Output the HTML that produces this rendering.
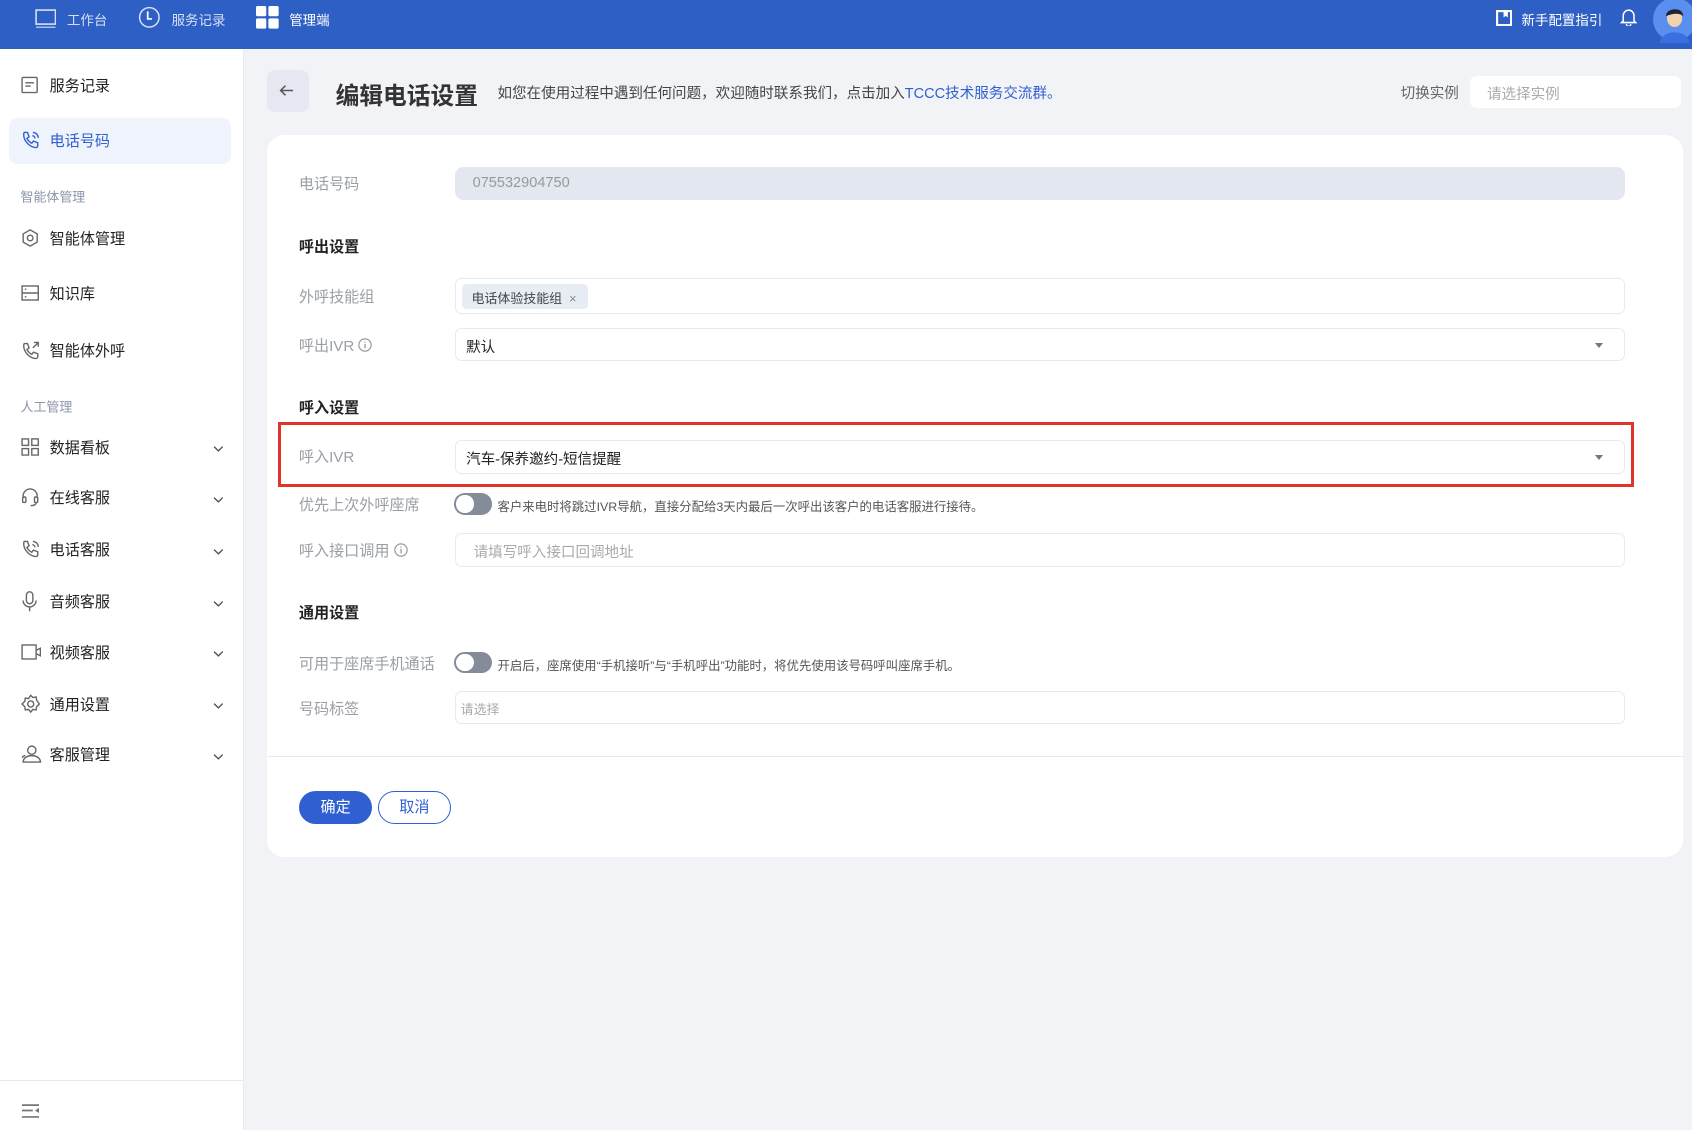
<!DOCTYPE html>
<html><head><meta charset="utf-8"><style>
html{zoom:1.07908}
*{box-sizing:border-box;margin:0;padding:0}
body{width:1568px;height:1047px;overflow:hidden;background:#f2f3f7;font-family:"Liberation Sans","Noto Sans CJK SC",sans-serif;position:relative;color:#222}
.a{position:absolute}
.hdr{left:0;top:0;width:1568px;height:45px;background:#2e5fc5}
.hdr span{color:#fff;font-size:12.5px}
.side{left:0;top:45px;width:226px;height:1002px;background:#fff;border-right:1px solid #e8eaef}
.it{position:absolute;left:46px;font-size:14px;color:#222;transform:translateY(-50%)}
.ic{position:absolute;left:19px;transform:translateY(-50%)}
.sec{position:absolute;left:19px;font-size:12px;color:#8b94aa;transform:translateY(-50%)}
.chev{position:absolute;left:197px;transform:translateY(-50%)}
.lbl{position:absolute;left:277px;font-size:14px;color:#9a9ea6;transform:translateY(-50%)}
.h{position:absolute;left:277px;font-size:14px;color:#222;font-weight:bold;transform:translateY(-50%)}
.inp{position:absolute;left:422px;width:1084px;border:1px solid #e8eaf0;border-radius:6px;background:#fff}
.arr{position:absolute;right:20px;top:50%;margin-top:-2px;border-left:4px solid transparent;border-right:4px solid transparent;border-top:5px solid #777}
.tog{position:absolute;left:421px;width:35px;height:20px;border-radius:10px;background:#848b99}
.tog:after{content:"";position:absolute;left:2px;top:2px;width:16px;height:16px;border-radius:50%;background:#fff}
.hint{position:absolute;left:461px;font-size:11.5px;color:#555;transform:translateY(-50%)}
</style></head><body>
<div class="a hdr">
 <svg class="a" style="left:32px;top:8px" width="20" height="18" viewBox="0 0 20 18"><rect x="1" y="1" width="18" height="13" fill="none" stroke="#fff" stroke-width="1.5" opacity=".8"/><line x1="1" y1="17" x2="19" y2="17" stroke="#fff" stroke-width="1.5" opacity=".6"/></svg>
 <span class="a" style="left:62px;top:8px;opacity:.8">工作台</span>
 <svg class="a" style="left:128px;top:6px" width="21" height="21" viewBox="0 0 21 21"><circle cx="10.5" cy="10.5" r="9" fill="none" stroke="#fff" stroke-width="1.4" opacity=".8"/><path d="M9 5v7h4" fill="none" stroke="#fff" stroke-width="1.6"/></svg>
 <span class="a" style="left:159px;top:8px;opacity:.8">服务记录</span>
 <svg class="a" style="left:237px;top:6px" width="22" height="22" viewBox="0 0 22 22"><rect x="0" y="0" width="9.5" height="9.5" rx="1.5" fill="#fff"/><rect x="11.5" y="0" width="9.5" height="9.5" rx="1.5" fill="#fff"/><rect x="0" y="11.5" width="9.5" height="9.5" rx="1.5" fill="#fff"/><rect x="11.5" y="11.5" width="9.5" height="9.5" rx="1.5" fill="#fff"/></svg>
 <span class="a" style="left:268px;top:8px">管理端</span>
 <svg class="a" style="left:1386px;top:9px" width="15" height="15" viewBox="0 0 15 15"><rect x="1" y="1" width="13" height="13" fill="none" stroke="#fff" stroke-width="2"/><path d="M7 1v6l2-1.5 2 1.5V1z" fill="#fff"/></svg>
 <span class="a" style="left:1410px;top:8px">新手配置指引</span>
 <svg class="a" style="left:1501px;top:7px" width="16" height="17" viewBox="0 0 16 17"><path d="M3 12V7a5 5 0 0110 0v5l1.5 1.5h-13z" fill="none" stroke="#fff" stroke-width="1.4"/><path d="M6 15a2 2 0 004 0" fill="none" stroke="#fff" stroke-width="1.3"/></svg>
 <svg class="a" style="left:1532px;top:0px" width="36" height="40" viewBox="0 0 36 40"><circle cx="20" cy="18" r="20" fill="#5a8ff0"/><path d="M6 40c2-8 8-10 14-10s12 2 14 10z" fill="#3a6fe0"/><ellipse cx="20" cy="17" rx="7" ry="8" fill="#f3d2b0"/><path d="M12 15c0-8 16-9 16 0-3-3-9-3-16 0z" fill="#1d2433"/></svg>
</div>
<div class="a side">
 <svg class="ic" style="top:34px" width="16" height="16" viewBox="0 0 16 16"><rect x="1" y="1" width="14" height="14" rx="1" fill="none" stroke="#666" stroke-width="1.3"/><path d="M4 6h8M4 9h5" stroke="#666" stroke-width="1.3"/></svg>
 <div class="it" style="top:34px">服务记录</div>
 <div class="a" style="left:8px;top:64px;width:206px;height:43px;border-radius:8px;background:#eef3fc"></div>
 <svg class="ic" style="top:85px" width="18" height="18" viewBox="0 0 18 18"><path d="M3 2l3 0 1.5 4-2 1.5c1 2 2.5 3.5 4.5 4.5l1.5-2 4 1.5v3c0 1-1 1.5-2 1.5C8 15.5 2.5 10 2.5 4c0-1 .5-2 .5-2z" fill="none" stroke="#2f5fd0" stroke-width="1.3"/><path d="M11 2a5 5 0 015 5M10.5 5a2.5 2.5 0 012.5 2.5" fill="none" stroke="#2f5fd0" stroke-width="1.3"/></svg>
 <div class="it" style="top:85px;color:#2f5fd0">电话号码</div>
 <div class="sec" style="top:137px">智能体管理</div>
 <svg class="ic" style="top:176px" width="17" height="17" viewBox="0 0 17 17"><path d="M8.5 1l6.5 3.7v7.6L8.5 16 2 12.3V4.7z" fill="none" stroke="#666" stroke-width="1.3"/><circle cx="8.5" cy="8.5" r="2.6" fill="none" stroke="#666" stroke-width="1.3"/></svg>
 <div class="it" style="top:176px">智能体管理</div>
 <svg class="ic" style="top:227px" width="17" height="15" viewBox="0 0 17 15"><rect x="1" y="1" width="15" height="13" fill="none" stroke="#666" stroke-width="1.3"/><path d="M1 7.5h15" stroke="#666" stroke-width="1.3"/><path d="M3.5 4h1.5M3.5 11h1.5" stroke="#666" stroke-width="1.3"/></svg>
 <div class="it" style="top:227px">知识库</div>
 <svg class="ic" style="top:279px" width="18" height="18" viewBox="0 0 18 18"><path d="M3 3l3 0 1.5 4-2 1.5c1 2 2.5 3.5 4.5 4.5l1.5-2 4 1.5v3c0 1-1 1.5-2 1.5C8 16.5 2.5 11 2.5 5c0-1 .5-2 .5-2z" fill="none" stroke="#666" stroke-width="1.3"/><path d="M11 7l5-5M12 2h4v4" fill="none" stroke="#666" stroke-width="1.3"/></svg>
 <div class="it" style="top:279px">智能体外呼</div>
 <div class="sec" style="top:331px">人工管理</div>
 <svg class="ic" style="top:369px" width="17" height="17" viewBox="0 0 17 17" fill="none" stroke="#666" stroke-width="1.3"><rect x="1" y="1" width="6" height="6"/><rect x="10" y="1" width="6" height="6"/><rect x="1" y="10" width="6" height="6"/><rect x="10" y="10" width="6" height="6"/></svg>
 <div class="it" style="top:369px">数据看板</div>
 <svg class="ic" style="top:416px" width="17" height="18" viewBox="0 0 17 18" fill="none" stroke="#666" stroke-width="1.3"><path d="M2 10V8a6.5 6.5 0 0113 0v2"/><rect x="1.5" y="9" width="3" height="5" rx="1"/><rect x="12.5" y="9" width="3" height="5" rx="1"/><path d="M14 14c0 2-2 3-5 3"/></svg>
 <div class="it" style="top:416px">在线客服</div>
 <svg class="ic" style="top:464px" width="18" height="18" viewBox="0 0 18 18"><path d="M3 2l3 0 1.5 4-2 1.5c1 2 2.5 3.5 4.5 4.5l1.5-2 4 1.5v3c0 1-1 1.5-2 1.5C8 15.5 2.5 10 2.5 4c0-1 .5-2 .5-2z" fill="none" stroke="#666" stroke-width="1.3"/><path d="M11 2a5 5 0 015 5M10.5 5a2.5 2.5 0 012.5 2.5" fill="none" stroke="#666" stroke-width="1.3"/></svg>
 <div class="it" style="top:464px">电话客服</div>
 <svg class="ic" style="top:512px" width="16" height="19" viewBox="0 0 16 19" fill="none" stroke="#666" stroke-width="1.3"><rect x="5" y="1" width="6" height="11" rx="3"/><path d="M2 9a6 6 0 0012 0M8 15v4"/></svg>
 <div class="it" style="top:512px">音频客服</div>
 <svg class="ic" style="top:559px" width="19" height="15" viewBox="0 0 19 15" fill="none" stroke="#666" stroke-width="1.3"><rect x="1" y="1" width="13" height="13"/><path d="M14 6l4-2v7l-4-2"/></svg>
 <div class="it" style="top:559px">视频客服</div>
 <svg class="ic" style="top:607px" width="18" height="18" viewBox="0 0 18 18" fill="none" stroke="#666" stroke-width="1.3"><path d="M9 1l2 2 3-.5.5 3L17 9l-2.5 2.5-.5 3-3-.5-2 2.5-2-2.5-3 .5-.5-3L1 9l2.5-2.5.5-3 3 .5z"/><circle cx="9" cy="9" r="2.8"/></svg>
 <div class="it" style="top:607px">通用设置</div>
 <svg class="ic" style="top:654px" width="20" height="17" viewBox="0 0 20 17" fill="none" stroke="#666" stroke-width="1.3"><circle cx="10" cy="5" r="3.8"/><path d="M2 16c0-4 4-6 8-6s8 2 8 6z"/><path d="M1 12c1-1.5 2-2 3-2"/></svg>
 <div class="it" style="top:654px">客服管理</div>
 <div class="chev" style="top:369px"><svg width="10" height="6" viewBox="0 0 10 6"><path d="M1 1l4 4 4-4" fill="none" stroke="#555" stroke-width="1.3"/></svg></div>
 <div class="chev" style="top:416px"><svg width="10" height="6" viewBox="0 0 10 6"><path d="M1 1l4 4 4-4" fill="none" stroke="#555" stroke-width="1.3"/></svg></div>
 <div class="chev" style="top:464px"><svg width="10" height="6" viewBox="0 0 10 6"><path d="M1 1l4 4 4-4" fill="none" stroke="#555" stroke-width="1.3"/></svg></div>
 <div class="chev" style="top:512px"><svg width="10" height="6" viewBox="0 0 10 6"><path d="M1 1l4 4 4-4" fill="none" stroke="#555" stroke-width="1.3"/></svg></div>
 <div class="chev" style="top:559px"><svg width="10" height="6" viewBox="0 0 10 6"><path d="M1 1l4 4 4-4" fill="none" stroke="#555" stroke-width="1.3"/></svg></div>
 <div class="chev" style="top:607px"><svg width="10" height="6" viewBox="0 0 10 6"><path d="M1 1l4 4 4-4" fill="none" stroke="#555" stroke-width="1.3"/></svg></div>
 <div class="chev" style="top:654px"><svg width="10" height="6" viewBox="0 0 10 6"><path d="M1 1l4 4 4-4" fill="none" stroke="#555" stroke-width="1.3"/></svg></div>
 <div class="a" style="left:0;top:956px;width:226px;border-top:1px solid #e8eaef"></div>
 <svg class="a" style="left:20px;top:978px" width="16" height="13" viewBox="0 0 16 13"><path d="M0 1h16M0 6h10M0 12h16" stroke="#777" stroke-width="1.6"/><path d="M16 3.5v5l-4-2.5z" fill="#777"/></svg>
</div>

<div class="a" style="left:247px;top:65px;width:39px;height:39px;border-radius:8px;background:#e5e8f0"></div>
<svg class="a" style="left:259px;top:78px" width="14" height="12" viewBox="0 0 14 12"><path d="M13 6H2M6 1.5L1.5 6 6 10.5" fill="none" stroke="#555" stroke-width="1.4"/></svg>
<div class="a" style="left:311px;top:70px;font-size:22px;font-weight:bold;color:#333">编辑电话设置</div>
<div class="a" style="left:461px;top:76px;font-size:13.5px;color:#444">如您在使用过程中遇到任何问题，欢迎随时联系我们，点击加入<span style="color:#2f5fd0">TCCC技术服务交流群。</span></div>
<div class="a" style="left:1298px;top:76px;font-size:13.5px;color:#666">切换实例</div>
<div class="a" style="left:1362px;top:70px;width:196px;height:30px;background:#fff;border-radius:6px;padding:7px 16px;font-size:13.5px;color:#aaa">请选择实例</div>

<div class="a" style="left:247px;top:125px;width:1313px;height:669px;background:#fff;border-radius:16px"></div>
<div class="lbl" style="top:170px">电话号码</div>
<div class="a" style="left:422px;top:155px;width:1084px;height:30px;background:#e3e7ef;border-radius:8px;padding:7px 16px;font-size:13.5px;line-height:16px;color:#999">075532904750</div>
<div class="h" style="top:228px">呼出设置</div>
<div class="lbl" style="top:274px">外呼技能组</div>
<div class="inp" style="top:258px;height:33px"></div>
<div class="a" style="left:428px;top:263px;width:117px;height:23px;background:#e8ecf5;border-radius:4px;font-size:12px;color:#444;padding:4px 9px">电话体验技能组 <span style="color:#888;margin-left:3px">×</span></div>
<div class="lbl" style="top:320px">呼出IVR <svg width="13" height="13" viewBox="0 0 13 13" style="vertical-align:-1px"><circle cx="6.5" cy="6.5" r="5.7" fill="none" stroke="#999" stroke-width="1.1"/><path d="M6.5 5.5v4M6.5 3.3v1" stroke="#999" stroke-width="1.2"/></svg></div>
<div class="inp" style="top:304px;height:31px"><span class="a" style="left:9px;top:6px;font-size:13.5px;color:#222">默认</span><div class="arr"></div></div>
<div class="h" style="top:377px">呼入设置</div>
<div class="lbl" style="top:423px">呼入IVR</div>
<div class="inp" style="top:408px;height:31px"><span class="a" style="left:9px;top:6px;font-size:13.5px;color:#222">汽车-保养邀约-短信提醒</span><div class="arr"></div></div>
<div class="a" style="left:258px;top:391px;width:1256px;height:60px;border:3px solid #e0332a"></div>
<div class="lbl" style="top:467px">优先上次外呼座席</div>
<div class="tog" style="top:457px"></div>
<div class="hint" style="top:469px">客户来电时将跳过IVR导航，直接分配给3天内最后一次呼出该客户的电话客服进行接待。</div>
<div class="lbl" style="top:510px">呼入接口调用 <svg width="13" height="13" viewBox="0 0 13 13" style="vertical-align:-1px"><circle cx="6.5" cy="6.5" r="5.7" fill="none" stroke="#999" stroke-width="1.1"/><path d="M6.5 5.5v4M6.5 3.3v1" stroke="#999" stroke-width="1.2"/></svg></div>
<div class="inp" style="top:494px;height:31px"><span class="a" style="left:16px;top:6px;font-size:13.5px;color:#aaa">请填写呼入接口回调地址</span></div>
<div class="h" style="top:567px">通用设置</div>
<div class="lbl" style="top:614px">可用于座席手机通话</div>
<div class="tog" style="top:604px"></div>
<div class="hint" style="top:616px">开启后，座席使用“手机接听”与“手机呼出”功能时，将优先使用该号码呼叫座席手机。</div>
<div class="lbl" style="top:656px">号码标签</div>
<div class="inp" style="top:640px;height:31px"><span class="a" style="left:4px;top:7px;font-size:12px;color:#aaa">请选择</span></div>
<div class="a" style="left:247px;top:701px;width:1313px;border-top:1px solid #e8eaf0"></div>
<div class="a" style="left:277px;top:733px;width:68px;height:31px;border-radius:16px;background:#2f5fd0;color:#fff;font-size:14px;text-align:center;line-height:31px">确定</div>
<div class="a" style="left:350px;top:733px;width:68px;height:31px;border-radius:16px;border:1px solid #2f5fd0;background:#fff;color:#2f5fd0;font-size:14px;text-align:center;line-height:29px">取消</div>
</body></html>
